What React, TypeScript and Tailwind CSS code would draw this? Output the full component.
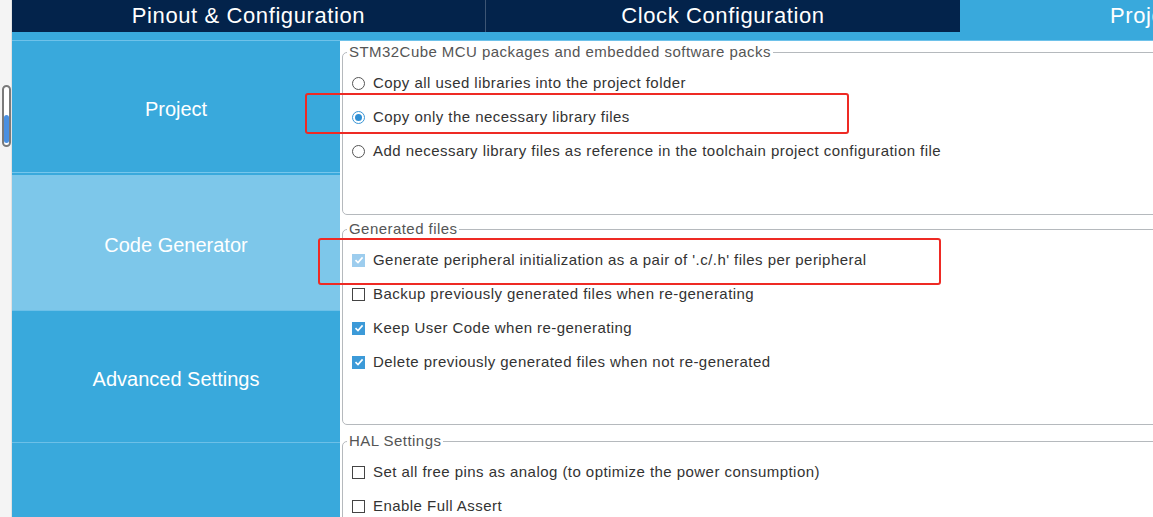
import React from 'react'

const font = { fontFamily: '"Liberation Sans", Arial, sans-serif' }

type Row = { label: string; kind: 'radio' | 'check'; on?: boolean; dim?: boolean }

// Small radio / checkbox glyphs in the look of the STM32CubeMX widgets
function Control({ kind, on, dim }: { kind: 'radio' | 'check'; on?: boolean; dim?: boolean }) {
  if (kind === 'radio') {
    return (
      <span
        className={`flex h-[13px] w-[13px] shrink-0 items-center justify-center rounded-full border bg-white ${
          on ? 'border-[#3a96d6]' : 'border-[#555]'
        }`}
      >
        {on && <span className="h-[7px] w-[7px] rounded-full bg-[#2f8fd4]"></span>}
      </span>
    )
  }
  if (!on) {
    return <span className="h-[13px] w-[13px] shrink-0 border border-[#444] bg-white"></span>
  }
  return (
    <span
      className={`flex h-[13px] w-[13px] shrink-0 items-center justify-center ${
        dim ? 'bg-[#9dcdee]' : 'bg-[#3c9ad8]'
      }`}
    >
      <svg width="10" height="10" viewBox="0 0 10 10">
        <path d="M1.5 5.2 L4 7.6 L8.6 2.4" fill="none" stroke="white" strokeWidth="1.6" />
      </svg>
    </span>
  )
}

function Group({
  title,
  rows,
  height,
  className = '',
}: {
  title: string
  rows: Row[]
  height: string
  className?: string
}) {
  return (
    <fieldset
      className={`ml-[2px] w-[840px] rounded-[5px] border border-[#b5b9bd] p-0 ${height} ${className}`}
    >
      <legend className="ml-[4px] px-[2px] text-[15px] leading-[16px] tracking-[0.45px] text-[#555]">
        {title}
      </legend>
      <div className="pt-[6px]">
        {rows.map((r) => (
          <div key={r.label} className="flex h-[34px] items-center gap-[8px] pl-[9px]">
            <Control kind={r.kind} on={r.on} dim={r.dim} />
            <span className="text-[15px] leading-[16px] tracking-[0.45px] text-[#333]">{r.label}</span>
          </div>
        ))}
      </div>
    </fieldset>
  )
}

const packs: Row[] = [
  { label: 'Copy all used libraries into the project folder', kind: 'radio' },
  { label: 'Copy only the necessary library files', kind: 'radio', on: true },
  {
    label: 'Add necessary library files as reference in the toolchain project configuration file',
    kind: 'radio',
  },
]

const generated: Row[] = [
  {
    label: "Generate peripheral initialization as a pair of '.c/.h' files per peripheral",
    kind: 'check',
    on: true,
    dim: true,
  },
  { label: 'Backup previously generated files when re-generating', kind: 'check' },
  { label: 'Keep User Code when re-generating', kind: 'check', on: true },
  { label: 'Delete previously generated files when not re-generated', kind: 'check', on: true },
]

const hal: Row[] = [
  { label: 'Set all free pins as analog (to optimize the power consumption)', kind: 'check' },
  { label: 'Enable Full Assert', kind: 'check' },
]

export default function App() {
  return (
    <div className="relative flex h-[517px] w-[1153px] overflow-hidden bg-white" style={font}>
      {/* left window edge with scroll thumb */}
      <div className="w-[12px] shrink-0 border-r border-[#e2e2e2] bg-[#f4f4f4] pt-[85px]">
        <div className="ml-[2px] flex h-[62px] w-[9px] flex-col justify-end rounded-full border-2 border-[#7a7a7a] bg-white pb-[2px]">
          <div className="h-[28px] rounded-full bg-[#4a90e2]"></div>
        </div>
      </div>

      <div className="flex min-w-0 flex-1 flex-col">
        {/* tab bar */}
        <div className="flex h-[32px] shrink-0 bg-[#03234b] text-[22px] leading-[31px] tracking-[0.6px] text-white">
          <div className="w-[474px] shrink-0 border-r border-[#3d5574] text-center">
            Pinout &amp; Configuration
          </div>
          <div className="w-[474px] shrink-0 text-center">Clock Configuration</div>
          <div className="w-[474px] shrink-0 whitespace-nowrap bg-[#39a9dc] pl-[150px]">Project Manager</div>
        </div>
        <div className="h-[9px] shrink-0 border-b border-[#6ec2ea] bg-[#39a9dc]"></div>

        <div className="flex min-h-0 flex-1">
          {/* sidebar */}
          <div className="flex w-[328px] shrink-0 flex-col bg-[#39a9dc] text-[20px] font-light text-white">
            <div className="flex h-[131px] items-center justify-center pt-[4px]">Project</div>
            <div className="h-[3px] border-t border-[#76c6ec]"></div>
            <div className="flex h-[135px] items-center justify-center bg-[#7dc7ea] pt-[4px]">Code Generator</div>
            <div className="flex h-[132px] items-center justify-center border-t border-[#6cc0e8] pt-[5px]">
              Advanced Settings
            </div>
            <div className="flex-1 border-t border-[#6cc0e8]"></div>
          </div>

          {/* settings */}
          <div className="min-w-0 flex-1 overflow-hidden pt-[3px]">
            <Group title="STM32Cube MCU packages and embedded software packs" rows={packs} height="h-[171px]" />
            <Group title="Generated files" rows={generated} height="h-[204px]" className="mt-[6px]" />
            <Group title="HAL Settings" rows={hal} height="h-[120px]" className="mt-[8px]" />
          </div>
        </div>
      </div>

      {/* red annotation boxes */}
      <div className="pointer-events-none absolute left-[305px] top-[93px] h-[41px] w-[544px] rounded-[3px] border-2 border-[#ee2a24]"></div>
      <div className="pointer-events-none absolute left-[318px] top-[238px] h-[47px] w-[623px] rounded-[3px] border-2 border-[#ee2a24]"></div>
    </div>
  )
}
